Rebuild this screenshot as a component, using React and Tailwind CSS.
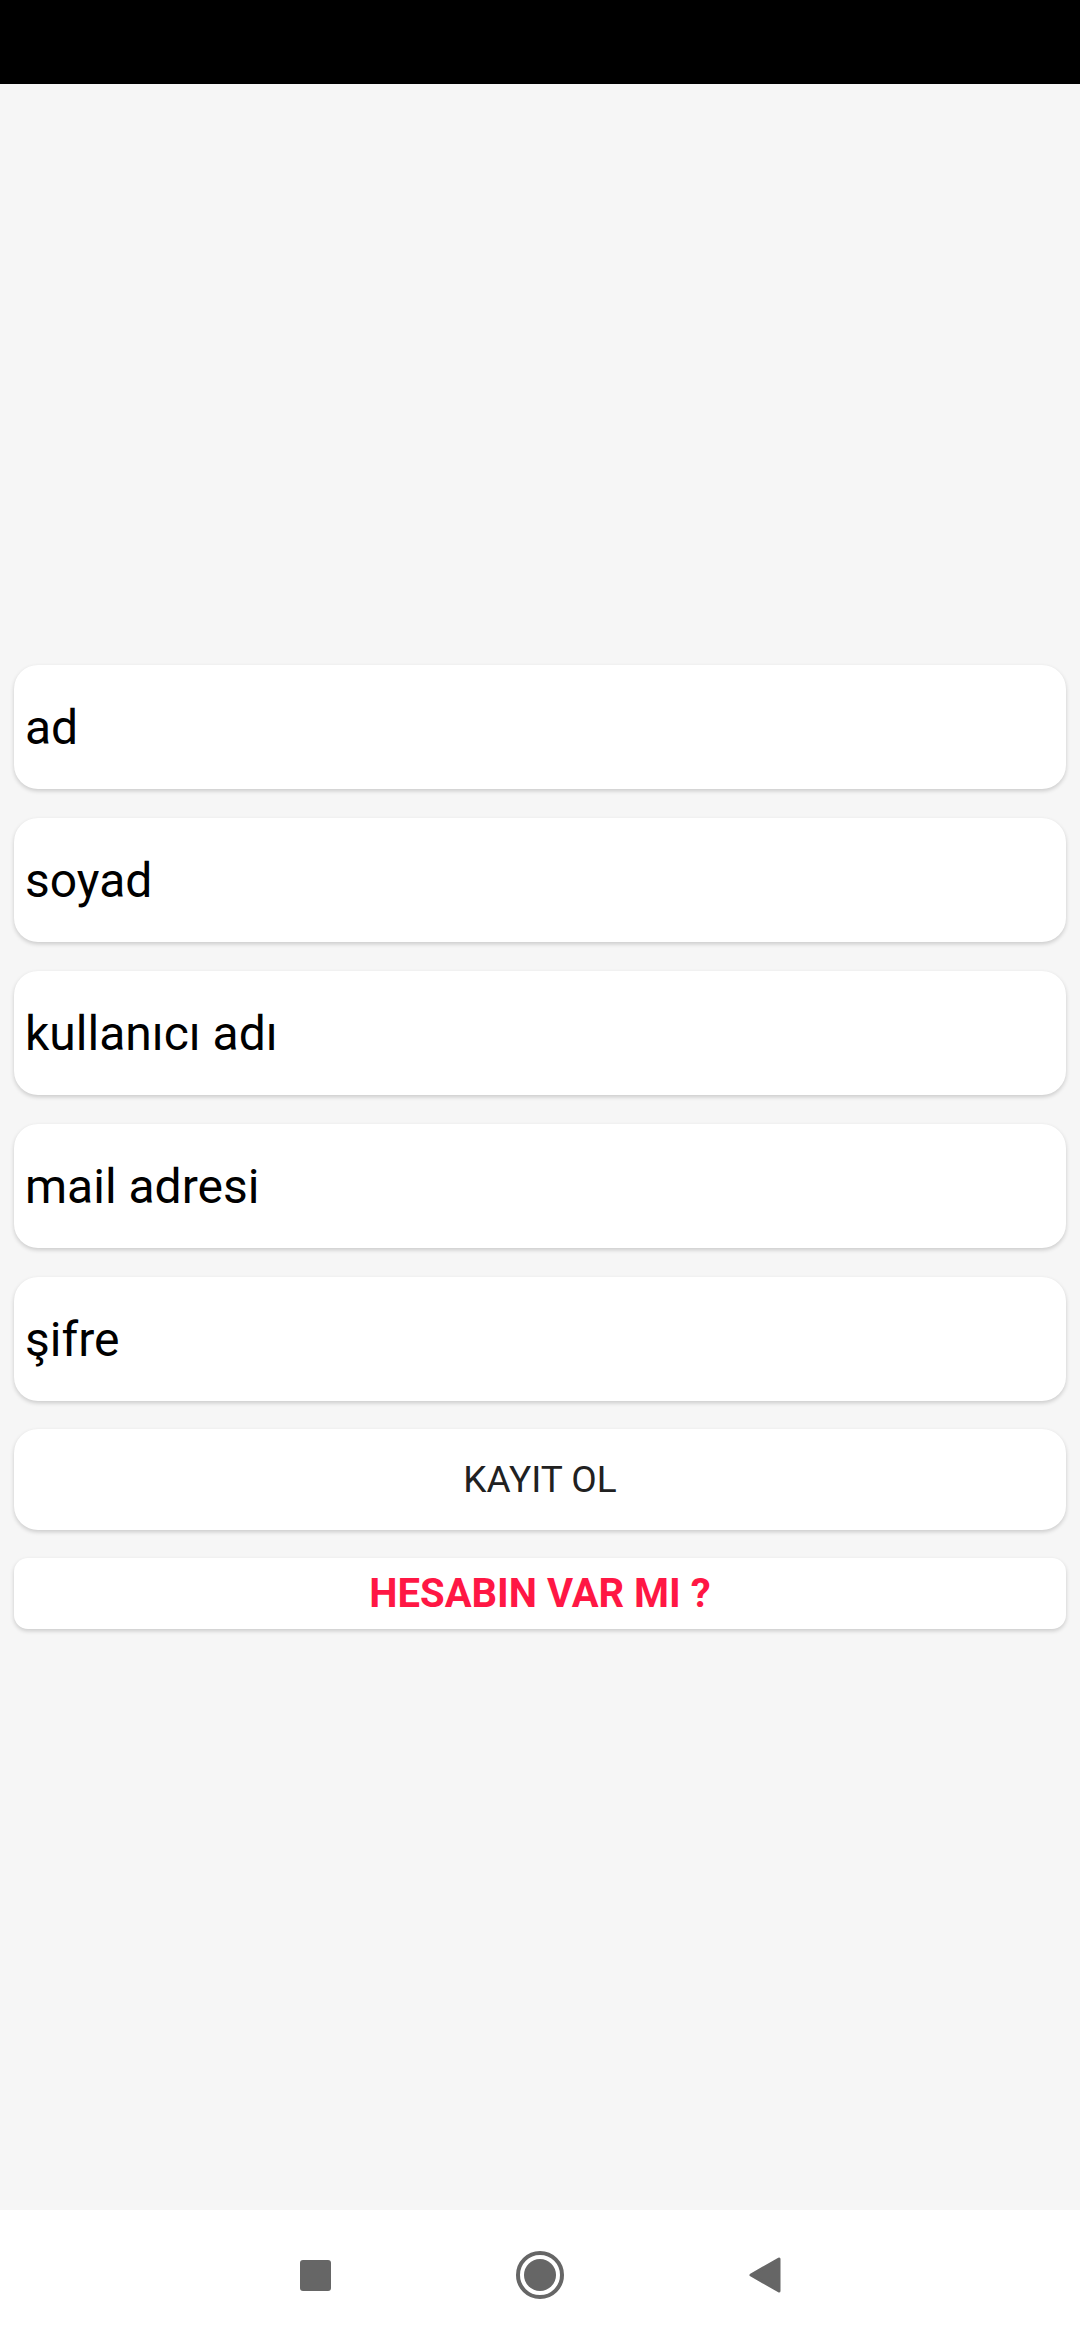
import { useState } from 'react';

const fields = [
  { name: 'ad', label: 'ad' },
  { name: 'soyad', label: 'soyad' },
  { name: 'username', label: 'kullanıcı adı' },
  { name: 'mail', label: 'mail adresi' },
  { name: 'password', label: 'şifre' },
];

const Register = () => {
  const [form, setForm] = useState({});

  const handleChange = e => {
    setForm({ ...form, [e.target.name]: e.target.value });
  };

  return (
    <div
      className="flex flex-col w-[1080px] h-[2340px] bg-[#f6f6f6]"
      style={{ fontFamily: 'Roboto, "Noto Sans", sans-serif' }}
    >
      {/* status bar */}
      <div className="h-[84px] shrink-0 bg-black"></div>

      {/* form */}
      <div className="flex-1 flex flex-col justify-center px-[14px]">
        <div className="flex flex-col gap-[29px]">
          {fields.map(f => (
            <input
              key={f.name}
              name={f.name}
              type="text"
              placeholder={f.label}
              value={form[f.name] || ''}
              onChange={handleChange}
              className="h-[124px] w-full rounded-[24px] bg-white px-[11px] text-[48px] text-black placeholder:text-black outline-none shadow-[0_2px_4px_rgba(0,0,0,0.18)]"
            />
          ))}
        </div>

        <button className="mt-[28px] h-[101px] w-full rounded-[24px] bg-white text-[37px] font-normal text-[#212121] shadow-[0_2px_4px_rgba(0,0,0,0.18)]">
          KAYIT OL
        </button>

        <button className="mt-[28px] h-[71px] w-full rounded-[14px] bg-white text-[40px] font-bold text-[#ff1744] shadow-[0_2px_4px_rgba(0,0,0,0.18)]">
          HESABIN VAR MI ?
        </button>
      </div>

      {/* navigation bar */}
      <div className="h-[130px] shrink-0 bg-white flex items-center justify-center gap-[165px]">
        <div className="w-[60px] flex justify-center">
          <div className="w-[31px] h-[31px] rounded-[3px] bg-[#666666]"></div>
        </div>
        <div className="w-[60px] flex justify-center">
          <div className="w-[48px] h-[48px] rounded-full border-[4px] border-[#666666] flex items-center justify-center">
            <div className="w-[32px] h-[32px] rounded-full bg-[#666666]"></div>
          </div>
        </div>
        <div className="w-[60px] flex justify-center">
          <svg width="32" height="36" viewBox="0 0 32 36">
            <path
              d="M30 2 L30 34 L2 18 Z"
              fill="#666666"
              stroke="#666666"
              strokeWidth="3"
              strokeLinejoin="round"
            />
          </svg>
        </div>
      </div>
    </div>
  );
};

export default function App() {
  return <Register />;
}
